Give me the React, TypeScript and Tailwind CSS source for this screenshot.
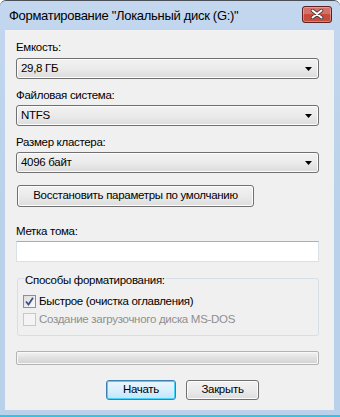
const font = { fontFamily: '"Segoe UI", "Liberation Sans", Arial, sans-serif' };

function Combo({ value }: { value: string }) {
  return (
    <div className="flex h-[21px] w-[303px] items-center justify-between rounded-[3px] border border-[#707070] bg-gradient-to-b from-[#f2f2f2] via-[#ebebeb] to-[#dcdcdc] pl-[4px] pr-[6px] text-[11.5px] tracking-[-0.3px] text-black shadow-[inset_0_0_0_1px_#fcfcfc]">
      <span>{value}</span>
      <svg width="7" height="4" viewBox="0 0 7 4">
        <path d="M0 0h7L3.5 4z" fill="#000" />
      </svg>
    </div>
  );
}

function Label({ text, className = '' }: { text: string; className?: string }) {
  return (
    <div className={`h-[15px] text-[11.5px] leading-[15px] tracking-[-0.3px] text-black ${className}`}>
      {text}
    </div>
  );
}

export default function App() {
  return (
    <div style={font} className="flex h-[417px] w-[340px] flex-col overflow-hidden bg-white">
      <div className="flex flex-1 flex-col rounded-t-[6px] border-t border-[#4a4f57] bg-gradient-to-b from-[#c3d7ef] via-[#b9d1ea] to-[#b9d1ea]">
        {/* title bar */}
        <div className="flex h-[29px] items-center justify-between pl-[9px] pr-[8px]">
          <span className="text-[13px] leading-[18px] tracking-[-0.3px] text-black">
            Форматирование "Локальный диск (G:)"
          </span>
          <div className="mt-[-3px] flex h-[17px] w-[30px] items-center justify-center rounded-[3px] border border-[#5e2020] bg-[#c74c3d] shadow-[inset_0_7px_0_0_rgba(255,255,255,0.22),inset_0_0_0_1px_rgba(255,255,255,0.3)]">
            <svg width="14" height="10" viewBox="0 0 14 10">
              <path
                d="M2.5 1.5L11.5 8.5M11.5 1.5L2.5 8.5"
                stroke="#3d3d3d"
                strokeWidth="3.6"
                fill="none"
                strokeLinecap="round"
              />
              <path
                d="M2.5 1.5L11.5 8.5M11.5 1.5L2.5 8.5"
                stroke="#ffffff"
                strokeWidth="2"
                fill="none"
                strokeLinecap="round"
              />
            </svg>
          </div>
        </div>

        {/* client area */}
        <div className="ml-[5px] mr-[6px] flex h-[380px] flex-col bg-[#f0f0f0] pl-[11px] pt-[10px]">
          <Label text="Емкость:" />
          <div className="mt-[3px]">
            <Combo value="29,8 ГБ" />
          </div>
          <Label text="Файловая система:" className="mt-[9px]" />
          <div className="mt-[2px]">
            <Combo value="NTFS" />
          </div>
          <Label text="Размер кластера:" className="mt-[9px]" />
          <div className="mt-[2px]">
            <Combo value="4096 байт" />
          </div>

          <button className="ml-[1px] mt-[12px] flex h-[22px] w-[237px] items-center justify-center rounded-[3px] border border-[#707070] bg-gradient-to-b from-[#f2f2f2] via-[#ebebeb] to-[#dddddd] text-[11.5px] tracking-[-0.3px] text-black shadow-[inset_0_0_0_1px_#fcfcfc]">
            Восстановить параметры по умолчанию
          </button>

          <Label text="Метка тома:" className="mt-[17px]" />
          <div className="mt-[2px] h-[21px] w-[303px] border border-[#dbdfe6] border-t-[#abadb3] bg-white" />

          {/* group box */}
          <div className="relative ml-[1px] mt-[16px] h-[58px] w-[302px] rounded-[3px] border border-[#d5dfe5]">
            <span className="absolute left-[6px] top-[-6px] bg-[#f0f0f0] px-[1px] text-[11.5px] leading-[15px] tracking-[-0.3px] text-black">
              Способы форматирования:
            </span>
            <div className="ml-[5px] mt-[15px] flex items-center gap-[3px] text-[11.5px] leading-[15px] tracking-[-0.3px] text-black">
              <div className="flex h-[13px] w-[13px] items-center justify-center border border-[#8e8f8f] bg-gradient-to-br from-[#dcdcdc] to-[#fbfbfb] p-[1px]">
                <svg width="9" height="9" viewBox="0 0 9 9">
                  <path d="M1 4.5l2.5 3L8 0.8" stroke="#3b4f8a" strokeWidth="1.8" fill="none" />
                </svg>
              </div>
              <span>Быстрое (очистка оглавления)</span>
            </div>
            <div className="ml-[5px] mt-[3px] flex items-center gap-[3px] text-[11.5px] leading-[15px] tracking-[-0.3px] text-[#8f8f8f]">
              <div className="h-[13px] w-[13px] border border-[#c8c8c8] bg-[#f4f4f4]" />
              <span>Создание загрузочного диска MS-DOS</span>
            </div>
          </div>

          {/* progress bar */}
          <div className="mt-[15px] h-[14px] w-[303px] rounded-[2px] border border-[#b2b2b2] bg-gradient-to-b from-[#f3f3f3] via-[#e0e0e0] to-[#d2d2d2] shadow-[inset_0_0_0_1px_#f8f8f8]" />

          {/* buttons */}
          <div className="ml-[90px] mt-[15px] flex gap-[10px]">
            <button className="flex h-[20px] w-[70px] items-center justify-center rounded-[3px] border border-[#3c7fb1] bg-gradient-to-b from-[#eaf6fd] via-[#d9f0fc] to-[#bee6fd] text-[11.5px] tracking-[-0.3px] text-black shadow-[inset_0_0_0_1px_#48d3fc]">
              Начать
            </button>
            <button className="flex h-[20px] w-[73px] items-center justify-center rounded-[3px] border border-[#707070] bg-gradient-to-b from-[#f2f2f2] via-[#ebebeb] to-[#dddddd] text-[11.5px] tracking-[-0.3px] text-black shadow-[inset_0_0_0_1px_#fcfcfc]">
              Закрыть
            </button>
          </div>
        </div>
        <div className="h-[5px]" />
      </div>
      <div className="h-[2px] bg-[#2ec6e8]" />
    </div>
  );
}
